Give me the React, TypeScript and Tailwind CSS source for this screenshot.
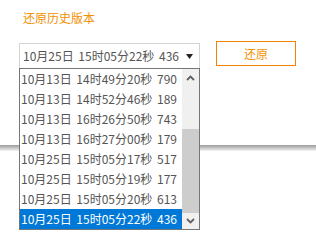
import React from "react";

const VERSIONS = [
  "10月13日 14时49分20秒 790",
  "10月13日 14时52分46秒 189",
  "10月13日 16时26分50秒 743",
  "10月13日 16时27分00秒 179",
  "10月25日 15时05分17秒 517",
  "10月25日 15时05分19秒 177",
  "10月25日 15时05分20秒 613",
  "10月25日 15时05分22秒 436",
];

const Chevron: React.FC<{ up?: boolean }> = ({ up }) => (
  <svg width="9" height="6" viewBox="0 0 9 6" className="block">
    <path
      d={up ? "M1 5 L4.5 1.5 L8 5" : "M1 1 L4.5 4.5 L8 1"}
      fill="none"
      stroke="#606060"
      strokeWidth="1.8"
    />
  </svg>
);

export default function App() {
  const selected = VERSIONS.length - 1;

  return (
    <div
      className="relative w-[316px] h-[250px] bg-white overflow-hidden text-[12px] leading-none [word-spacing:2px]"
      style={{ fontFamily: '"Noto Sans CJK SC", "Noto Sans", sans-serif' }}
    >
      <div className="pt-[11px] pl-[23px] text-[12px] text-[#f39000] leading-[14px]">还原历史版本</div>

      <div className="flex items-start pl-[19px] mt-[16px]">
        <div className="mt-[2px] w-[181px] h-[26px] border border-[#d4d4d4] flex items-center pl-[3px] pr-[6px] text-[#555]">
          <span className="flex-1 whitespace-nowrap">{VERSIONS[selected]}</span>
          <svg width="7" height="5" viewBox="0 0 7 5" className="block">
            <polygon points="0,0 7,0 3.5,5" fill="#222" />
          </svg>
        </div>
        <button className="ml-[16px] w-[80px] h-[25px] border border-[#f08300] text-[#f39000] text-[12px] bg-white">
          还原
        </button>
      </div>

      <div className="mt-[76px] h-[6px] bg-linear-to-b from-[#9c9c9c] to-[#f4f4f4]" />

      <div className="absolute left-[19px] top-[68px] w-[181px] h-[162px] border border-[#767676] bg-white flex">
        <div className="w-[162px] flex flex-col">
          {VERSIONS.map((v, i) => (
            <div
              key={v}
              className={`h-[20px] flex items-center pl-[1px] whitespace-nowrap ${
                i === selected ? "bg-[#0078d7] text-white" : "text-[#555]"
              }`}
            >
              {v}
            </div>
          ))}
        </div>
        <div className="w-[17px] bg-[#f0f0f0] flex flex-col">
          <div className="h-[17px] flex items-center justify-center">
            <Chevron up />
          </div>
          <div className="h-[43px]" />
          <div className="h-[84px] bg-[#cdcdcd]" />
          <div className="flex-1 flex items-center justify-center">
            <Chevron />
          </div>
        </div>
      </div>
    </div>
  );
}
